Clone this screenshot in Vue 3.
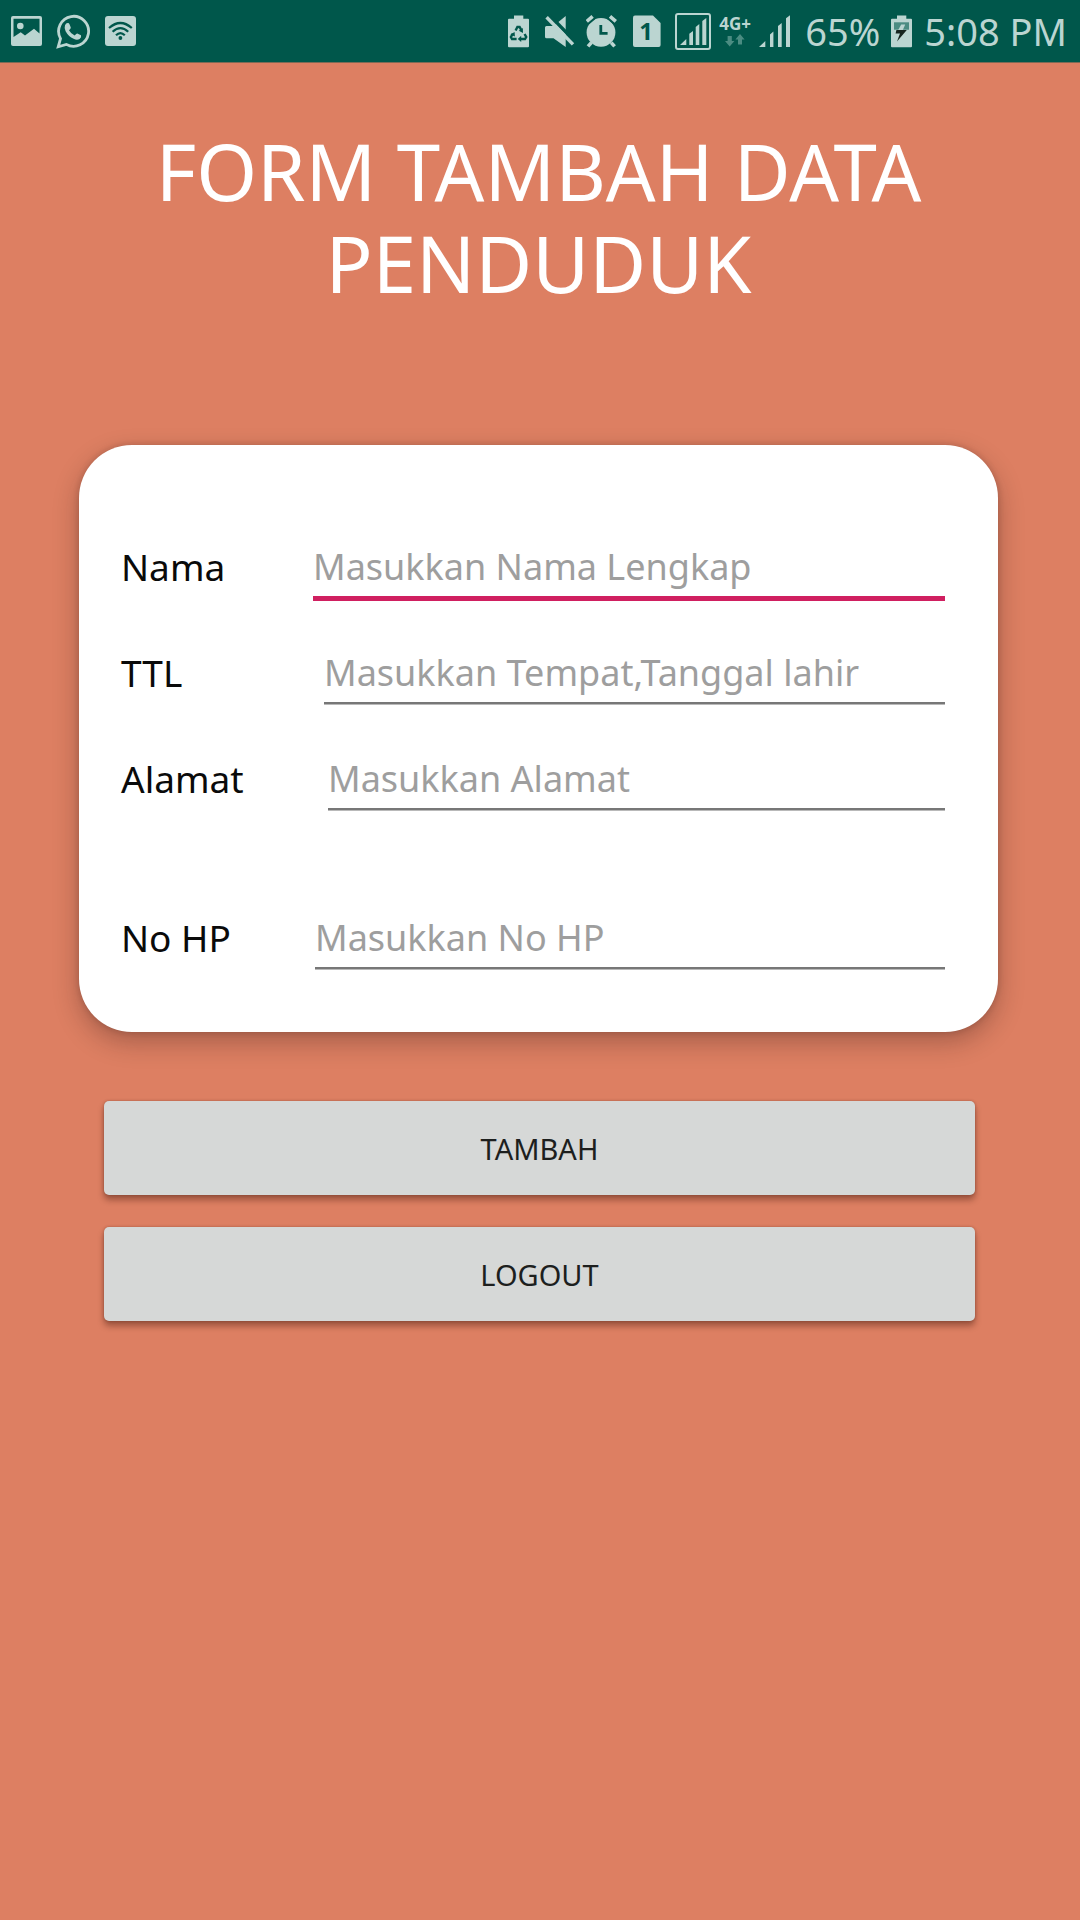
<script setup>
import { reactive } from 'vue'

const fields = [
  { id: 'nama', label: 'Nama', hint: 'Masukkan Nama Lengkap', labelWidth: 192, active: true },
  { id: 'ttl', label: 'TTL', hint: 'Masukkan Tempat,Tanggal lahir', labelWidth: 203 },
  { id: 'alamat', label: 'Alamat', hint: 'Masukkan Alamat', labelWidth: 207, tall: true },
  { id: 'nohp', label: 'No HP', hint: 'Masukkan No HP', labelWidth: 194 },
]

const values = reactive({ nama: '', ttl: '', alamat: '', nohp: '' })

function clearForm() {
  for (const field of fields) values[field.id] = ''
}
</script>

<template>
  <div class="screen">
    <header class="status">
      <div class="notices">
        <svg width="31" height="36" viewBox="0 0 31 36" aria-hidden="true">
          <path fill-rule="evenodd" d="M2 3H29Q31 3 31 5V31Q31 33 29 33H2Q0 33 0 31V5Q0 3 2 3ZM2.5 5.7H28.5V20.5L23 15.7L14 22.5L9.7 19.3L2.5 24Z" />
          <circle cx="9.3" cy="13" r="3.3" />
        </svg>
        <svg width="35" height="36" viewBox="0 0 35 36" aria-hidden="true">
          <path fill="none" stroke="currentColor" stroke-width="2.8" d="M2.2 33.8L4.5 25.6A15 15 0 1 1 10.3 31.4Z" />
          <path d="M9 12.2Q10 9.8 12 10Q13 10 13.5 11.3L14.8 14.4Q15 15.2 13 17.3Q14.8 20.8 18.7 22.6Q20.5 20.2 21.3 20.4L25 22.3Q25.8 24.4 23.6 26Q21 27.4 17.6 25.8Q12.5 23.6 9.6 18.2Q8 15 9 12.2Z" />
        </svg>
        <svg width="31" height="36" viewBox="0 0 31 36" aria-hidden="true">
          <rect y="3" width="31" height="30" rx="3" />
          <g class="cut" fill="none" stroke-width="2.2">
            <path d="M4 15Q15.4 5 26.8 15M7.6 18.8Q15.4 11.4 23.2 18.8M11 22.3Q15.4 17.9 19.8 22.3" />
          </g>
          <circle class="hole" cx="15.4" cy="25" r="1.9" />
        </svg>
      </div>

      <div class="system">
        <svg width="28" height="36" viewBox="0 0 28 36" aria-hidden="true">
          <path d="M6 2.5H15.3V5.7H20Q21 5.7 21 6.7V33.3Q21 34.3 20 34.3H1Q0 34.3 0 33.3V6.7Q0 5.7 1 5.7H6Z" />
          <path class="cut" fill="none" stroke-width="2.4" d="M7.6 17.5L9.4 14H11.6L13.5 17.4M16.6 21L18.2 24L17 26H12.5M8.6 26H4L2.9 24L4.9 20.6" />
          <path class="hole" d="M14.8 15L15 20L10.8 17.8ZM13.2 22.8V29L9.8 26ZM2.4 21.6L6.6 19L6.9 23.6Z" />
        </svg>
        <svg width="34" height="36" viewBox="0 0 34 36" aria-hidden="true">
          <path d="M2.5 13H9.5L21.7 3V34L9.5 25.3H2.5Q1 25.3 1 23.8V14.5Q1 13 2.5 13Z" />
          <path class="cut" stroke-width="3.4" d="M5 1.8L32 29.5" />
          <path stroke="currentColor" stroke-width="3.4" d="M2.6 4.2L29 31.4" />
        </svg>
        <svg width="39" height="36" viewBox="0 0 39 36" aria-hidden="true">
          <circle cx="15" cy="19.4" r="14.4" />
          <path class="cut" stroke-width="7" d="M1 8.6L7 3.6M23.6 3.6L29.6 8.6" />
          <path stroke="currentColor" stroke-width="3.6" d="M.8 8.4L6.6 3.4M24 3.4L29.8 8.4M5.4 29.6L2 33.4M25.2 29.6L28.6 33.4" />
          <path class="cut" fill="none" stroke-width="2.8" d="M14.8 12V20.4H21.6" />
        </svg>
        <svg width="34" height="36" viewBox="0 0 34 36" aria-hidden="true">
          <path d="M2 2.5H20L27.6 10V32Q27.6 34 25.6 34H2Q0 34 0 32V4.5Q0 2.5 2 2.5Z" />
          <text class="hole sim" x="13" y="27" text-anchor="middle">1</text>
        </svg>
        <svg width="36" height="38" viewBox="0 0 36 38" aria-hidden="true">
          <rect x="1" y="2" width="34" height="35" rx="2" fill="none" stroke="currentColor" stroke-width="2" />
          <path d="M5 33L11.3 27V33ZM14.3 33V21.7L18 19V33ZM20.7 33V15L24.3 12V33ZM27.3 33V9L31.3 6V33Z" />
        </svg>
        <span class="network">
          4G+
          <svg class="arrows" width="20" height="13" viewBox="0 0 20 13" aria-hidden="true">
            <path d="M2.6 2H6.8V7H9.4L4.7 12.6L0 7H2.6ZM15 0L19.6 5.6H17V10.6H13V5.6H10.4Z" />
          </svg>
        </span>
        <svg width="32" height="36" viewBox="0 0 32 36" aria-hidden="true">
          <path d="M0 34L6.3 28V34ZM11 34V21.5L14.4 18.5V34ZM19 34V13L22.7 10V34ZM27 34V5.3L31 2.3V34Z" />
        </svg>
        <div class="clock">
          <span>65%</span>
          <svg width="22" height="36" viewBox="0 0 22 36" aria-hidden="true">
            <path d="M6 2.5H15.3V5.7H20Q21 5.7 21 6.7V33.3Q21 34.3 20 34.3H1Q0 34.3 0 33.3V6.7Q0 5.7 1 5.7H6Z" />
            <path class="dim" d="M3 9.3H18V16.7H3Z" />
            <path d="M10.2 11.4H14.2L11.8 17H7.2Z" />
            <path class="bolt" d="M5.4 17H15.8L6 28.6L9 20.6H4.6Z" />
          </svg>
          <time>5:08 PM</time>
        </div>
      </div>
    </header>

    <main>
      <h1>FORM TAMBAH DATA PENDUDUK</h1>
      <form @submit.prevent="clearForm">
        <div class="card">
          <div v-for="field in fields" :key="field.id" class="row" :class="{ tall: field.tall }">
            <label :for="field.id" :style="{ width: field.labelWidth + 'px' }">{{ field.label }}</label>
            <input
              :id="field.id"
              v-model="values[field.id]"
              type="text"
              :class="{ active: field.active }"
              :placeholder="field.hint"
            />
          </div>
        </div>
        <div class="actions">
          <button type="submit">TAMBAH</button>
          <button type="button">LOGOUT</button>
        </div>
      </form>
    </main>
  </div>
</template>

<style>
body {
  margin: 0;
  background: #dd7f62;
}
</style>

<style scoped>
.screen {
  min-height: 100vh;
  background: #dd7f62;
  font-family: "Noto Sans", "Open Sans", sans-serif;
}

.status {
  display: flex;
  justify-content: space-between;
  align-items: center;
  height: 62px;
  padding: 0 13px 0 11px;
  background: #00574b;
  border-bottom: 1px solid #7d6a55;
  color: #bbd5d1;
}

.status svg {
  flex: none;
  fill: currentColor;
}

.notices {
  display: flex;
  align-items: center;
  gap: 14px;
}

.system {
  display: flex;
  align-items: center;
  gap: 8px;
}

.status .cut {
  stroke: #00574b;
}

.status .hole {
  fill: #00574b;
}

.sim {
  font-size: 24px;
  font-weight: 700;
}

.network {
  display: flex;
  flex-direction: column;
  align-items: center;
  width: 32px;
  padding-bottom: 2px;
  font-size: 17px;
  font-weight: 700;
  line-height: 20px;
}

.status .arrows,
.status .dim {
  fill: #4b8c82;
}

.status .bolt {
  fill: #17251f;
}

.clock {
  display: flex;
  align-items: center;
  gap: 11px;
  margin-left: 6px;
  font-size: 38px;
  line-height: 62px;
  white-space: nowrap;
}

main {
  padding: 62px 82px 40px 79px;
}

h1 {
  margin: 0;
  color: #fff;
  font-size: 78px;
  font-weight: 400;
  line-height: 92px;
  text-align: center;
}

.card {
  margin-top: 136px;
  padding: 95px 53px 15px 42px;
  border-radius: 53px;
  background: #fff;
  box-shadow: 0 10px 26px rgba(40, 20, 20, 0.3), 0 0 6px rgba(40, 20, 20, 0.2);
}

.row {
  display: flex;
  align-items: flex-start;
  min-height: 106px;
}

.row.tall {
  min-height: 159px;
}

label,
input {
  font-size: 36px;
  line-height: 54px;
}

label {
  flex: none;
  color: #0a0a0a;
  font-size: 37px;
}

input {
  flex: 1;
  min-width: 0;
  height: 54px;
  padding: 0 0 2px;
  box-sizing: content-box;
  border: 0;
  border-bottom: 2px solid #777;
  border-radius: 0;
  outline: none;
  background: transparent;
  box-shadow: 0 1px #b9b9b9;
  color: #0a0a0a;
  font-family: inherit;
}

input.active {
  border-bottom: 5px solid #d01f60;
  box-shadow: none;
}

input::placeholder {
  color: #9e9e9e;
  opacity: 1;
}

.actions {
  display: flex;
  flex-direction: column;
  gap: 32px;
  margin: 69px 23px 0 25px;
}

button {
  height: 94px;
  padding: 1px 0 0;
  border: 0;
  border-radius: 5px;
  background: #d6d8d7;
  box-shadow: 0 5px 6px rgba(60, 20, 10, 0.4), 0 0 3px rgba(60, 20, 10, 0.3);
  color: #1d1f1e;
  font-family: inherit;
  font-size: 29px;
  line-height: 40px;
}
</style>
